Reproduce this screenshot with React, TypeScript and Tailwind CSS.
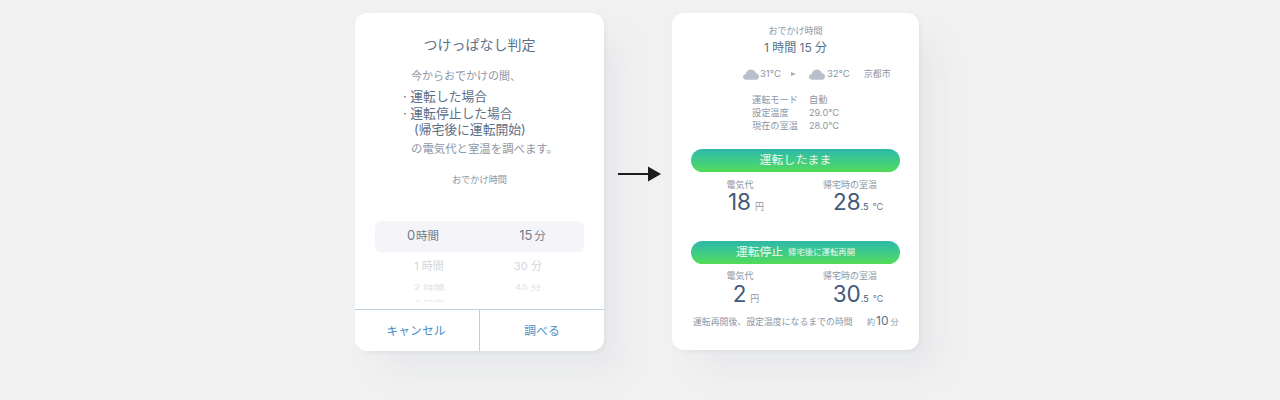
const font = "font-['Inter','Noto_Sans_CJK_JP',sans-serif]";

function Cloud() {
  return (
    <svg width="16" height="11" viewBox="0 0 16 11" fill="#bac0cb">
      <path d="M3.6 10.8C1.6 10.8 0 9.5 0 7.8c0-1.5 1.2-2.7 2.8-2.9C3.2 2.5 5.300.6 8 .6c2.300 0 4.200 1.400 4.800 3.400 1.800.2 3.200 1.700 3.200 3.400 0 1.900-1.600 3.400-3.600 3.400z" />
    </svg>
  );
}

function Result({ yen, temp, labelGap }: { yen: string; temp: string; labelGap: string }) {
  return (
    <div className="flex text-[#43597a]">
      <div className="w-[98px] flex flex-col items-center">
        <div className={`text-[9px] leading-[12px] text-[#8d96a6] ${labelGap}`}>電気代</div>
        <div className="flex items-baseline gap-[4px] h-[23px] leading-[22px] pl-[12px]">
          <span className="text-[22.500px]">{yen}</span>
          <span className="text-[9px] text-[#8d96a6]">円</span>
        </div>
      </div>
      <div className="w-[122px] flex flex-col items-center">
        <div className={`text-[9px] leading-[12px] text-[#8d96a6] ${labelGap}`}>帰宅時の室温</div>
        <div className="flex items-baseline h-[23px] leading-[22px] pl-[16px]">
          <span className="text-[22.500px]">{temp}</span>
          <span className="text-[9px] text-[#43597a]">.5</span>
          <span className="text-[9px] text-[#6d7a8e] ml-[4px]">°C</span>
        </div>
      </div>
    </div>
  );
}

export default function App() {
  return (
    <div className={`${font} w-[1280px] h-[400px] overflow-hidden bg-[#f1f1f2] flex items-start pl-[355px] pt-[13px]`}>
      {/* 左のカード */}
      <div className="w-[249px] h-[338px] bg-white rounded-[12px] flex flex-col overflow-hidden shrink-0 shadow-[2px_2px_5px_-1px_rgba(170,178,190,0.22),22px_24px_28px_-6px_rgba(190,195,202,0.18)]">
        <div className="flex-1 flex flex-col overflow-hidden">
          <div className="pt-[22px] text-center text-[14px] leading-[20px] text-[#5c6f88]">つけっぱなし判定</div>
          <div className="pl-[56px] mt-[13px] text-[11px] leading-[16px] text-[#8d96a6]">今からおでかけの間、</div>
          <div className="pl-[48px] mt-[5px] text-[12.800px] leading-[16.500px] text-[#5c6f88]">
            <div>· 運転した場合</div>
            <div>· 運転停止した場合</div>
            <div className="pl-[11px]">(帰宅後に運転開始)</div>
          </div>
          <div className="pl-[56px] mt-[1px] text-[11.400px] leading-[19px] text-[#8d96a6]">の電気代と室温を調べます。</div>
          <div className="mt-[15px] text-center text-[9.200px] leading-[12px] text-[#8d96a6]">おでかけ時間</div>
          <div className="mx-[20px] mt-[35px] h-[31px] shrink-0 rounded-[6px] bg-[#f5f4f8] flex items-center text-[11.500px] text-[#727c8d]">
            <div className="w-[96px] flex justify-center items-baseline gap-[1px]"><span className="text-[13px]">0</span>時間</div>
            <div className="w-[112px] flex justify-center items-baseline gap-[2px] pl-[11px]"><span className="text-[13px]">15</span>分</div>
          </div>
          <div className="mx-[20px] flex mt-[7px] text-[11px] leading-[14px] text-[#d3d6dc] shrink-0">
            <div className="w-[96px] text-center pl-[12px]">1 時間</div>
            <div className="w-[112px] text-center pl-[2px]">30 分</div>
          </div>
          <div className="mx-[20px] flex mt-[9px] text-[10.500px] leading-[12px] text-[#dfe1e5] scale-y-[0.7] shrink-0">
            <div className="w-[96px] text-center pl-[12px]">2 時間</div>
            <div className="w-[112px] text-center pl-[2px]">45 分</div>
          </div>
          <div className="mx-[20px] flex mt-[1px] text-[10.500px] leading-[12px] text-[#e8eaed] scale-y-[0.25] shrink-0">
            <div className="w-[96px] text-center pl-[12px]">3 時間</div>
          </div>
        </div>
        <div className="h-[42px] flex border-t border-[#bfd0e2] text-[11.800px] text-[#4a8fc6] shrink-0">
          <div className="w-[125px] pt-[3px] pr-[2px] flex items-center justify-center border-r border-[#bfd0e2]">キャンセル</div>
          <div className="flex-1 pt-[3px] flex items-center justify-center">調べる</div>
        </div>
      </div>

      {/* 矢印 */}
      <div className="w-[68px] h-[321px] flex items-center justify-center shrink-0">
        <svg width="44" height="16" viewBox="0 0 44 16" fill="#1d1d1f" className="ml-[4px]">
          <rect x="0" y="7" width="32" height="2" />
          <path d="M30 0.500 L43 8 L30 15.500 z" />
        </svg>
      </div>

      {/* 右のカード */}
      <div className="w-[247px] h-[337px] bg-white rounded-[12px] flex flex-col shrink-0 shadow-[2px_2px_5px_-1px_rgba(170,178,190,0.22),22px_24px_28px_-6px_rgba(190,195,202,0.18)]">
        <div className="pt-[12px] text-center text-[9px] leading-[12px] text-[#8d96a6]">おでかけ時間</div>
        <div className="mt-[2px] text-center text-[12px] leading-[18px] text-[#5c6f88]">1 時間 15 分</div>
        <div className="mt-[10px] h-[14px] pl-[71px] flex items-center text-[9.500px] text-[#8d96a6]">
          <Cloud />
          <span className="ml-[1px]">31°C</span>
          <span className="ml-[10px] w-0 h-0 border-y-[2.500px] border-y-transparent border-l-[5px] border-l-[#a7aebb]" />
          <span className="ml-[13px]"><Cloud /></span>
          <span className="ml-[2px]">32°C</span>
          <span className="ml-[14px] text-[9px]">京都市</span>
        </div>
        <div className="mt-[12px] pl-[80px] text-[9.200px] leading-[13px] text-[#8d96a6]">
          <div className="flex"><span className="w-[57px]">運転モード</span><span>自動</span></div>
          <div className="flex"><span className="w-[57px]">設定温度</span><span>29.0°C</span></div>
          <div className="flex"><span className="w-[57px]">現在の室温</span><span>28.0°C</span></div>
        </div>
        <div className="mx-[19px] mt-[17px] h-[23px] rounded-full bg-gradient-to-b from-[#2eb8a9] to-[#52dc55] flex items-center justify-center text-[11.800px] tracking-[0.3px] text-[#e9f8ee]">
          運転したまま
        </div>
        <div className="mt-[7px] pl-[19px]">
          <Result yen="18" temp="28" labelGap="" />
        </div>
        <div className="mx-[19px] mt-[27px] h-[23px] rounded-full bg-gradient-to-b from-[#2eb8a9] to-[#52dc55] flex items-center justify-center text-[#e9f8ee]">
          <span className="text-[11.800px]">運転停止</span>
          <span className="ml-[5px] text-[8.400px]">帰宅後に運転再開</span>
        </div>
        <div className="mt-[6px] pl-[19px]">
          <Result yen="2" temp="30" labelGap="mb-[1px]" />
        </div>
        <div className="mt-[5px] pl-[21px] flex items-baseline text-[8.900px] text-[#8d96a6] leading-[20px]">
          <span className="w-[174px]">運転再開後、設定温度になるまでの時間</span>
          <span className="text-[8px]">約</span>
          <span className="text-[12px] text-[#5c6f88] ml-[1px]">10</span>
          <span className="text-[8px] ml-[2px]">分</span>
        </div>
      </div>
    </div>
  );
}
